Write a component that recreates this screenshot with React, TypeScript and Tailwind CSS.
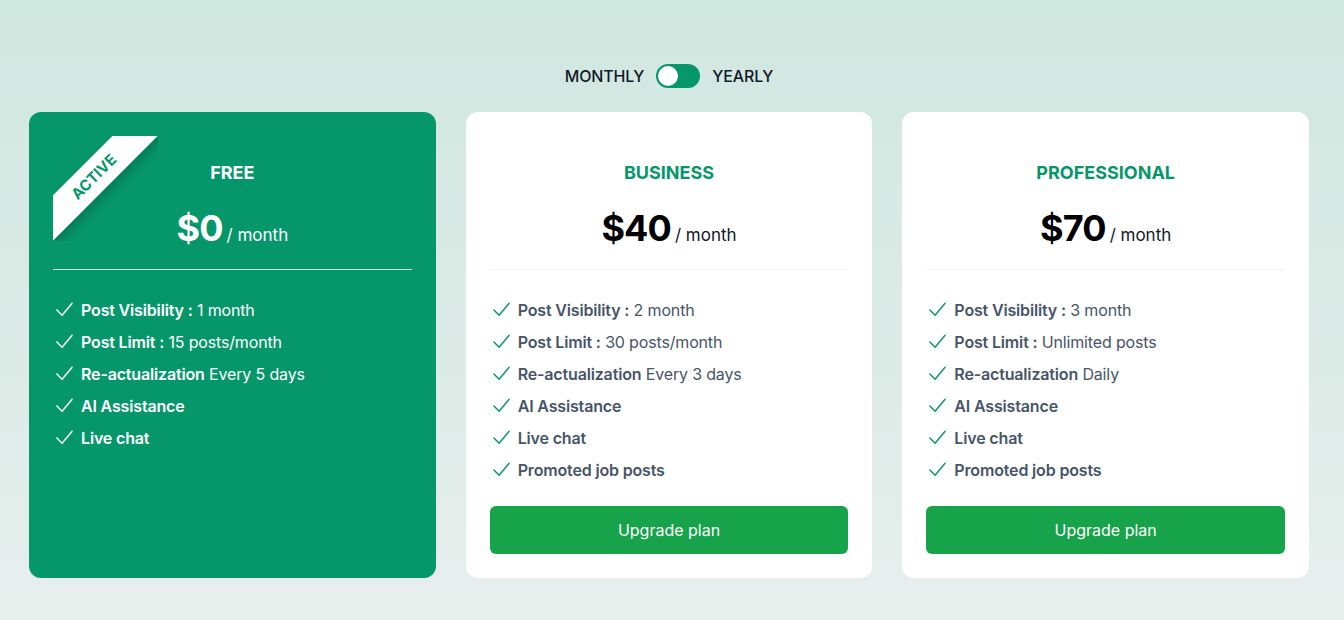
import { useState } from 'react';

type Feature = { label: string; value?: string };

type Plan = {
  name: string;
  price: number;
  features: Feature[];
  active?: boolean;
};

const plans: Plan[] = [
  {
    name: 'FREE',
    price: 0,
    active: true,
    features: [
      { label: 'Post Visibility :', value: '1 month' },
      { label: 'Post Limit :', value: '15 posts/month' },
      { label: 'Re-actualization', value: 'Every 5 days' },
      { label: 'AI Assistance' },
      { label: 'Live chat' },
    ],
  },
  {
    name: 'BUSINESS',
    price: 40,
    features: [
      { label: 'Post Visibility :', value: '2 month' },
      { label: 'Post Limit :', value: '30 posts/month' },
      { label: 'Re-actualization', value: 'Every 3 days' },
      { label: 'AI Assistance' },
      { label: 'Live chat' },
      { label: 'Promoted job posts' },
    ],
  },
  {
    name: 'PROFESSIONAL',
    price: 70,
    features: [
      { label: 'Post Visibility :', value: '3 month' },
      { label: 'Post Limit :', value: 'Unlimited posts' },
      { label: 'Re-actualization', value: 'Daily' },
      { label: 'AI Assistance' },
      { label: 'Live chat' },
      { label: 'Promoted job posts' },
    ],
  },
];

function Check({ className }: { className: string }) {
  return (
    <svg viewBox="0 0 20 20" className={className} fill="none" stroke="currentColor" strokeWidth="1.5" strokeLinecap="round" strokeLinejoin="round">
      <path d="M2 10.5 L7.5 16 L18 3.5" />
    </svg>
  );
}

function PlanCard({ plan }: { plan: Plan }) {
  const on = plan.active;
  return (
    <div className={`relative flex-1 flex flex-col rounded-xl px-6 pt-12 pb-6 ${on ? 'bg-[#059669] text-white' : 'bg-white'}`}>

      {/* Ribbon */}
      {on && (
        <div className="absolute top-6 left-6 w-[105px] h-[105px] overflow-hidden">
          <div className="absolute left-[-49px] top-[25px] w-[180px] h-[32px] -rotate-45 bg-white shadow-[0_6px_10px_rgba(0,0,0,0.18)] flex items-center justify-center">
            <span className="text-[#059669] text-[15px] font-bold">ACTIVE</span>
          </div>
        </div>
      )}

      {/* Header */}
      <div className={`text-center pb-5 border-b ${on ? 'border-white/80' : 'border-gray-100'}`}>
        <h3 className={`text-lg font-bold leading-6 mt-px ${on ? 'text-white' : 'text-[#059669]'}`}>{plan.name}</h3>
        <div className="mt-[23px] flex items-baseline justify-center">
          <span className={`text-4xl font-bold leading-10 tracking-tight ${on ? 'text-white' : 'text-black'}`}>${plan.price}</span>
          <span className={`ml-1 text-[17px] ${on ? 'text-white' : 'text-gray-900'}`}>/ month</span>
        </div>
      </div>

      {/* Features */}
      <ul className="mt-7 flex flex-col gap-2">
        {plan.features.map((f) => (
          <li key={f.label} className={`flex items-center gap-[7px] text-base leading-6 tracking-[-0.01em] ${on ? 'text-white' : 'text-[#475569]'}`}>
            <Check className={`w-[19px] h-[19px] ml-[2px] ${on ? 'text-white' : 'text-[#059669]'}`} />
            <span>
              <span className="font-semibold">{f.label}</span>
              {f.value && <span> {f.value}</span>}
            </span>
          </li>
        ))}
      </ul>

      {!on && (
        <button type="button" className="mt-6 w-full rounded-md bg-[#16a34a] py-3 text-base leading-6 text-white">
          Upgrade plan
        </button>
      )}
    </div>
  );
}

export default function App() {
  const [yearly, setYearly] = useState(false);

  return (
    <div className="min-h-screen bg-linear-to-b from-[#d0e7e0] to-[#e7efed] font-[Inter,sans-serif] pt-16 pb-[42px]">
      <div className="flex justify-center pr-[6px]">
        <div className="w-[1280px]">

          {/* Billing toggle */}
          <div className="flex items-center justify-center gap-3 mb-6">
            <span className="text-base font-medium text-gray-900 tracking-[-0.01em]">MONTHLY</span>
            <button
              type="button"
              onClick={() => setYearly(!yearly)}
              className="relative w-11 h-6 rounded-full bg-[#059669]"
            >
              <span className={`absolute top-[2px] w-5 h-5 rounded-full bg-white transition-all ${yearly ? 'left-[22px]' : 'left-[2px]'}`} />
            </button>
            <span className="text-base font-medium text-gray-900 tracking-[-0.01em]">YEARLY</span>
          </div>

          {/* Plans */}
          <div className="flex gap-[30px]">
            {plans.map((p) => (
              <PlanCard key={p.name} plan={p} />
            ))}
          </div>

        </div>
      </div>
    </div>
  );
}
